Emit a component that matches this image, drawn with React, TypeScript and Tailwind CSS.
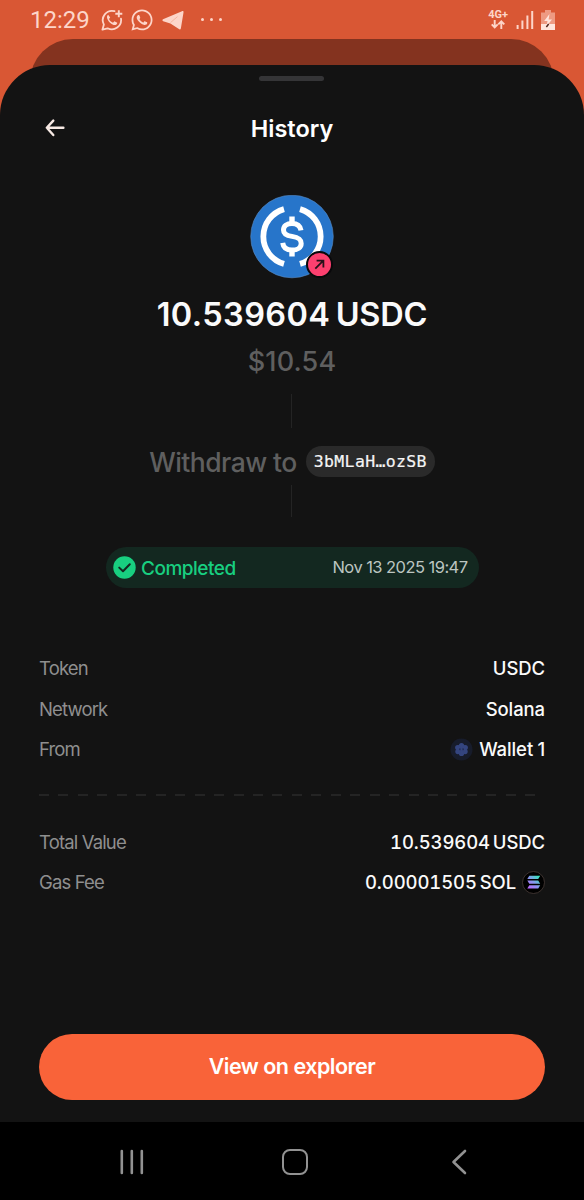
import React from 'react';
import { FaWhatsapp } from 'react-icons/fa';

interface DetailRowProps {
  label: string;
  children: React.ReactNode;
}

const StatusBar: React.FC = () => (
  <div className="flex h-[39px] shrink-0 items-center justify-between pl-[30px] pr-[29px] text-[#fdd5c9]">
    <div className="flex items-center">
      <span className="w-[71px] font-['Roboto'] text-[24px] leading-6 whitespace-nowrap">12:29</span>
      <svg width="22" height="22" viewBox="0 0 22 22" fill="none">
        <path d="M13.5 2.2A9.3 9.3 0 0 0 2.9 15.6L1.4 20.7l5.2-1.4A9.3 9.3 0 0 0 20 9.7" stroke="currentColor" strokeWidth="1.8" strokeLinecap="round" strokeLinejoin="round" />
        <path d="M7.2 5.8c-1.4.9-1.6 2.7-.7 4.4 1.3 2.8 3.3 4.7 6.1 5.7 1.8.6 3.5-.3 3.7-2.2l-2.9-1.5-1.4 1.5c-1.9-.8-3.2-2.1-4-3.8l1.2-1.4z" fill="currentColor" />
        <path d="M17.8 1.2v7M14.3 4.7h7" stroke="currentColor" strokeWidth="1.9" />
      </svg>
      <FaWhatsapp className="ml-[7px]" size={24} />
      <svg className="ml-[8px]" width="22" height="20" viewBox="0 0 22 20">
        <path d="M1 9.3 20 1.2c1-.4 1.7.1 1.5 1.2l-2.6 15.8c-.2 1.2-1 1.5-2 .9l-8.5-5.6-7.2-2.2c-1-.4-1-1.5-.2-2z" fill="currentColor" />
        <path d="m8.5 12.6 7-6" stroke="#f0a78f" strokeWidth="0.7" />
      </svg>
      <div className="ml-[17px] flex gap-[6px]">
        <span className="size-[3px] rounded-full bg-current"></span>
        <span className="size-[3px] rounded-full bg-current"></span>
        <span className="size-[3px] rounded-full bg-current"></span>
      </div>
    </div>

    <div className="flex items-center">
      <div className="flex flex-col items-center">
        <span className="font-['Roboto'] text-[11px] leading-[10px] font-bold">4G+</span>
        <svg width="14" height="9" viewBox="0 0 14 9" fill="none" stroke="currentColor" strokeWidth="1.9">
          <path d="M3.7 0v7.2M.7 4.4l3 3 3-3M10.3 9V1.6M7.3 4.4l3-3 3 3" />
        </svg>
      </div>
      <svg className="ml-2" width="18" height="20" viewBox="0 0 18 20" stroke="currentColor" strokeWidth="2">
        <path d="M1.6 15v4M6.4 10.5V19M11.4 5.5V19M16.2 1v18" />
      </svg>
      <svg className="ml-[7px]" width="14" height="20" viewBox="0 0 14 20">
        <path d="M4 0h6v2.5h4V20H0V2.5h4z" fill="#ee9a82" />
        <path d="M0 14h14v6H0z" fill="#ffe5dc" />
        <path d="M8.5 4 3.2 11h3.3L5.4 16.5 11 9.4H7.6z" fill="#ffe5dc" />
        <path d="M7.6 14 5.4 17" stroke="#4c2118" strokeWidth="1.4" />
      </svg>
    </div>
  </div>
);

const TokenLogo: React.FC = () => (
  <div className="relative size-[84px]">
    <svg width="84" height="84" viewBox="0 0 84 84" fill="none">
      <circle cx="42" cy="41.5" r="41.3" fill="#2775ca" stroke="#5b8fca" strokeWidth="0.6" />
      <path d="M34 14.1a28.5 28.5 0 0 0 0 54.8M50 14.1a28.5 28.5 0 0 1 0 54.8" stroke="#fff" strokeWidth="5.8" />
      <path
        d="M51 35.3C50.2 30.6 46.8 28.4 42 28.4c-5.2 0-8.5 2.7-8.5 6.5 0 4.4 3.3 5.7 8.5 6.5 5.8.9 9.2 2.4 9.2 7 0 4-3.6 6.7-9.2 6.7-5.3 0-8.7-2.3-9.3-7.2"
        stroke="#fff"
        strokeWidth="5"
      />
      <path d="M42 21.5v6M42 55.5v6" stroke="#fff" strokeWidth="5.4" strokeLinejoin="round" />
    </svg>
    <div className="absolute top-[56px] left-[56px] flex size-[27px] items-center justify-center rounded-full border-[2.5px] border-[#09090b] bg-[#fc406f]">
      <svg width="11" height="11" viewBox="0 0 11 11" fill="none" stroke="#26111a" strokeWidth="1.8">
        <path d="M1.3 9.7 9.3 1.7M2.6 1.7h6.8v6.8" />
      </svg>
    </div>
  </div>
);

const WalletAvatar: React.FC = () => (
  <svg width="23" height="23" viewBox="0 0 23 23">
    <circle cx="11.5" cy="11.5" r="11" fill="#171c2b" />
    <g fill="#34457f">
      <circle cx="11.5" cy="11.5" r="5.2" />
      <circle cx="11.5" cy="7.6" r="2.6" />
      <circle cx="15.3" cy="9.6" r="2.6" />
      <circle cx="15.1" cy="13.6" r="2.6" />
      <circle cx="11.5" cy="15.4" r="2.6" />
      <circle cx="7.9" cy="13.6" r="2.6" />
      <circle cx="7.7" cy="9.6" r="2.6" />
    </g>
    <path d="M9.9 10.4v1.8M13.1 10.4v1.8" stroke="#1b2340" strokeWidth="1" />
  </svg>
);

const SolanaLogo: React.FC = () => (
  <svg width="23" height="23" viewBox="0 0 23 23">
    <defs>
      <linearGradient id="sol" x1="5" y1="17" x2="17" y2="5" gradientUnits="userSpaceOnUse">
        <stop offset="0" stopColor="#c060ff" />
        <stop offset="0.5" stopColor="#8a96f0" />
        <stop offset="1" stopColor="#30ecb8" />
      </linearGradient>
    </defs>
    <circle cx="11.5" cy="11.5" r="11" fill="#000" stroke="#4a3d3a" strokeWidth="0.8" />
    <path d="M7.3 4.8h10.9l-2 3.3H5.3zM5.3 9.5h10.9l2 3.3H7.3zM7.3 14.2h10.9l-2 3.3H5.3z" fill="url(#sol)" />
  </svg>
);

const DetailRow: React.FC<DetailRowProps> = ({ label, children }) => (
  <div className="flex h-[40.6px] items-center justify-between text-[18.5px] whitespace-nowrap">
    <span className="tracking-[-0.85px] text-[#8f8f8f]">{label}</span>
    <span className="flex items-center font-medium tracking-[-0.1px] text-[#fafafa] tabular-nums [word-spacing:-2px]">{children}</span>
  </div>
);

const App: React.FC = () => {
  return (
    <div className="flex h-[1200px] w-[584px] flex-col overflow-hidden bg-[#d95734] font-['Inter',sans-serif]">
      <StatusBar />

      {/* Sheet stacked behind the current one */}
      <div className="mx-[30px] -mb-[34px] h-[60px] shrink-0 rounded-t-[43px] bg-[#84331f]"></div>

      <div className="relative flex min-h-0 flex-1 flex-col items-center rounded-t-[50px] bg-[#131313] px-[39px]">
        <div className="mt-[11px] mr-px h-[5px] w-[65px] shrink-0 rounded-full bg-[#353537]"></div>

        <header className="mt-[31px] flex h-8 w-full items-center justify-between">
          <svg className="ml-[6px]" width="20" height="20" viewBox="0 0 20 20" fill="none" stroke="#f7e9e4" strokeWidth="2.4" strokeLinecap="round" strokeLinejoin="round">
            <path d="M18.4 9.8H2M8.3 2.6 1.8 9.8l6.5 7.2" />
          </svg>
          <h1 className="pt-px text-[23.5px] font-semibold text-white">History</h1>
          <span className="w-[26px]"></span>
        </header>

        <div className="mt-[51px]">
          <TokenLogo />
        </div>
        <div className="mt-[16px] text-[32.5px] leading-10 font-semibold whitespace-nowrap text-[#fafafa] [word-spacing:-3px]">
          <span className="tracking-[0.4px]">10.539604</span> <span className="tracking-[-0.2px]">USDC</span>
        </div>
        <div className="mt-[11px] text-[27px] leading-8 font-medium tracking-[0.15px] text-[#5f5f5f]">$10.54</div>

        <div className="mt-[16px] mr-px h-[34px] w-px bg-[#242424]"></div>
        <div className="mt-[18px] flex h-[31px] items-center gap-[9px]">
          <span className="text-[26.5px] leading-8 font-medium tracking-[-0.55px] whitespace-nowrap text-[#5f5f5f]">Withdraw to</span>
          <span className="flex h-[31px] w-[129px] items-center justify-center rounded-full bg-[#2a2a2a] pt-[2px] font-['DejaVu_Sans_Mono',monospace] text-[16.5px] tracking-[0.33px] text-[#f5f5f5] [-webkit-text-stroke:0.2px_#f5f5f5]">
            3bMLaH…ozSB
          </span>
        </div>
        <div className="mt-[8px] mr-px h-[32px] w-px bg-[#242424]"></div>

        <div className="mt-[30px] flex h-[41px] w-[373px] shrink-0 items-center justify-between rounded-full bg-[#132820] pr-[11px] pl-[7px]">
          <div className="flex items-center gap-[5.5px]">
            <svg width="23" height="23" viewBox="0 0 23 23" fill="none">
              <circle cx="11.5" cy="11.5" r="11.2" fill="#18cf80" />
              <path d="m6.2 11.6 3.8 3.7 6.8-7" stroke="#132820" strokeWidth="2" strokeLinecap="round" strokeLinejoin="round" />
            </svg>
            <span className="pt-[3px] text-[19px] font-medium tracking-[-0.5px] text-[#18cf80]">Completed</span>
          </div>
          <span className="text-[16.5px] tracking-[-0.55px] whitespace-nowrap text-[#bcc5c1]">Nov 13 2025 19:47</span>
        </div>

        <section className="mt-[60.5px] w-full">
          <DetailRow label="Token">USDC</DetailRow>
          <DetailRow label="Network">Solana</DetailRow>
          <DetailRow label="From">
            <span className="mr-[6px]"><WalletAvatar /></span>
            <span className="proportional-nums [word-spacing:-0.5px]">Wallet 1</span>
          </DetailRow>
        </section>

        <div className="mt-[24px] h-[2px] w-full shrink-0 bg-[repeating-linear-gradient(90deg,#242424_0_10px,transparent_10px_19.45px)]"></div>

        <section className="mt-[26px] w-full">
          <DetailRow label="Total Value">10.539604 USDC</DetailRow>
          <DetailRow label="Gas Fee">
            0.00001505 SOL
            <span className="mb-px ml-[6px]"><SolanaLogo /></span>
          </DetailRow>
        </section>

        <button className="mt-auto mb-[22px] h-[66px] w-full shrink-0 rounded-full bg-[#f96339] pb-px text-[21.5px] font-semibold tracking-[-0.5px] text-white">
          View on explorer
        </button>
      </div>

      {/* System navigation */}
      <nav className="flex h-[78px] shrink-0 items-center bg-black pt-[2px] pl-[119px] text-[#929292]">
        <svg width="26" height="26" viewBox="0 0 26 26" stroke="currentColor" strokeWidth="2.6" strokeLinecap="round">
          <path d="M2.8 2v22M12.8 2v22M22.8 2v22" />
        </svg>
        <span className="ml-[137px] size-[26px] rounded-[8px] border-[2.8px] border-current"></span>
        <svg className="ml-[143px]" width="16" height="26" viewBox="0 0 16 26" fill="none" stroke="currentColor" strokeWidth="2.6" strokeLinecap="round" strokeLinejoin="round">
          <path d="M14 2 2.5 13 14 24" />
        </svg>
      </nav>
    </div>
  );
};

export default App;
